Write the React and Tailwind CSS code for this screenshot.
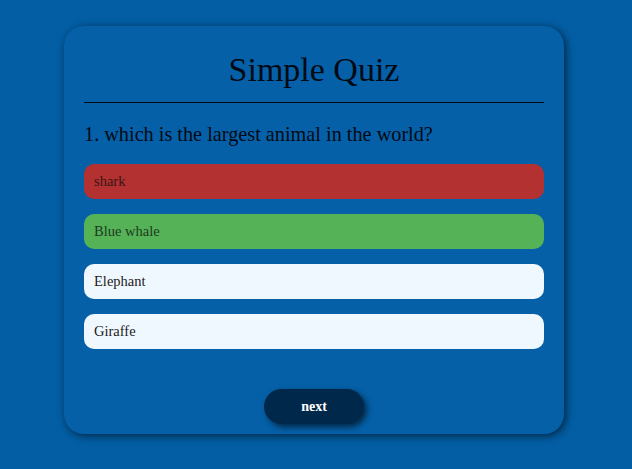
import React from 'react';

const answers = [
  { text: 'shark', state: 'wrong' },
  { text: 'Blue whale', state: 'right' },
  { text: 'Elephant', state: 'idle' },
  { text: 'Giraffe', state: 'idle' },
];

const stateClasses = {
  wrong: 'bg-[#b33131] text-[#3b1414]',
  right: 'bg-[#55b257] text-[#1d3a1e]',
  idle: 'bg-[#f0f8ff] text-[#1b1b1b]',
};

export default function App() {
  return (
    <div className="min-h-[469px] bg-[#035ea4] pt-[26px] pb-[35px] [font-family:Georgia,'Liberation_Serif',serif]">
      <div className="ml-[64px] w-[500px] rounded-[20px] bg-[#0560a8] px-[20px] pt-[24px] pb-[10px] shadow-[2px_2px_8px_rgba(0,0,0,0.6)]">
        {/* Header */}
        <div className="border-b border-[#050a10] pb-[12px]">
          <h1 className="text-center text-[34px] leading-[40px] text-[#010a14]">Simple Quiz</h1>
        </div>

        <h2 className="mt-[19px] text-[20.25px] leading-[24px] text-[#010a14]">
          1. which is the largest animal in the world?
        </h2>

        <div className="mt-[18px] flex flex-col gap-[15px]">
          {answers.map((a) => (
            <button
              key={a.text}
              className={`h-[35px] w-full rounded-[10px] px-[10px] text-left text-[14.5px] ${stateClasses[a.state]}`}
            >
              {a.text}
            </button>
          ))}
        </div>

        <div className="mt-[40px] flex justify-center">
          <button className="h-[35px] w-[100px] rounded-full bg-[#00284a] text-[14px] font-bold text-white shadow-[3px_3px_6px_rgba(0,0,0,0.6)]">
            next
          </button>
        </div>
      </div>
    </div>
  );
}
